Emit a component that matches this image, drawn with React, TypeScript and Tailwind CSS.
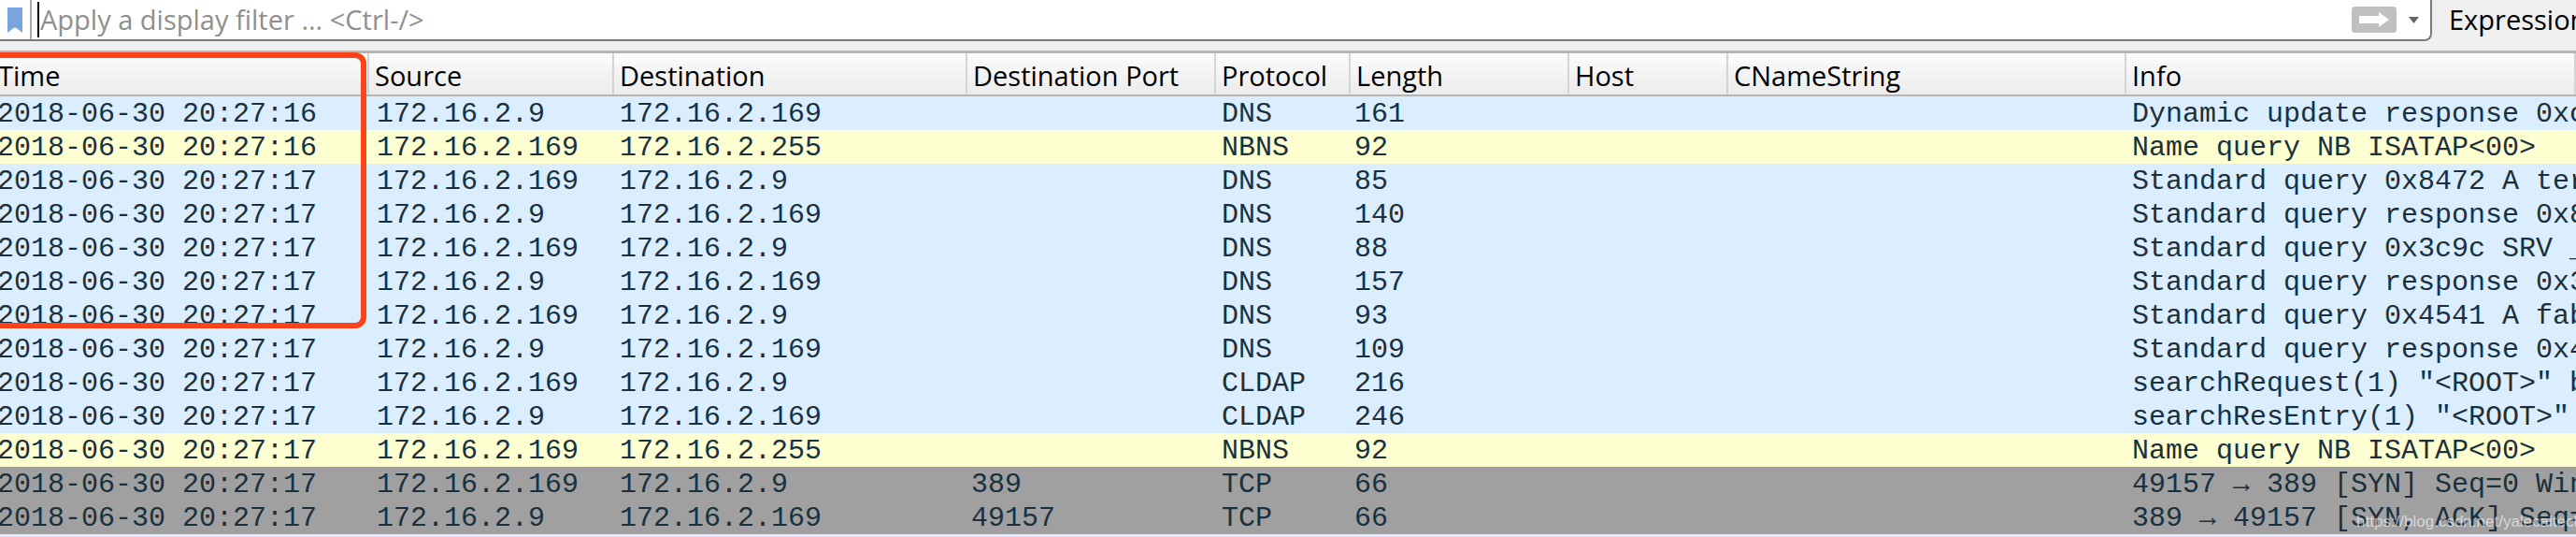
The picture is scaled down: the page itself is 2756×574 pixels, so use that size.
const columns = [
  { name: "Time", width: "w-[395px]", pad: "pl-0 -indent-[2px]" },
  { name: "Source", width: "w-[262px]", pad: "pl-[6px]" },
  { name: "Destination", width: "w-[378px]", pad: "pl-[6px]" },
  { name: "Destination Port", width: "w-[266px]", pad: "pl-[6px]" },
  { name: "Protocol", width: "w-[144px]", pad: "pl-[6px]" },
  { name: "Length", width: "w-[234px]", pad: "pl-[6px]" },
  { name: "Host", width: "w-[170px]", pad: "pl-[6px]" },
  { name: "CNameString", width: "w-[426px]", pad: "pl-[6px]" },
  { name: "Info", width: "flex-1", pad: "pl-[6px]" },
];

type Row = [string, string, string, string, string, string, string, string];

const rows: Row[] = [
  ["b", "2018-06-30 20:27:16", "172.16.2.9", "172.16.2.169", "", "DNS", "161", "Dynamic update response 0xc"],
  ["y", "2018-06-30 20:27:16", "172.16.2.169", "172.16.2.255", "", "NBNS", "92", "Name query NB ISATAP<00>"],
  ["b", "2018-06-30 20:27:17", "172.16.2.169", "172.16.2.9", "", "DNS", "85", "Standard query 0x8472 A ter"],
  ["b", "2018-06-30 20:27:17", "172.16.2.9", "172.16.2.169", "", "DNS", "140", "Standard query response 0x8"],
  ["b", "2018-06-30 20:27:17", "172.16.2.169", "172.16.2.9", "", "DNS", "88", "Standard query 0x3c9c SRV _"],
  ["b", "2018-06-30 20:27:17", "172.16.2.9", "172.16.2.169", "", "DNS", "157", "Standard query response 0x3"],
  ["b", "2018-06-30 20:27:17", "172.16.2.169", "172.16.2.9", "", "DNS", "93", "Standard query 0x4541 A fab"],
  ["b", "2018-06-30 20:27:17", "172.16.2.9", "172.16.2.169", "", "DNS", "109", "Standard query response 0x4"],
  ["b", "2018-06-30 20:27:17", "172.16.2.169", "172.16.2.9", "", "CLDAP", "216", 'searchRequest(1) "<ROOT>" b'],
  ["b", "2018-06-30 20:27:17", "172.16.2.9", "172.16.2.169", "", "CLDAP", "246", 'searchResEntry(1) "<ROOT>" '],
  ["y", "2018-06-30 20:27:17", "172.16.2.169", "172.16.2.255", "", "NBNS", "92", "Name query NB ISATAP<00>"],
  ["g", "2018-06-30 20:27:17", "172.16.2.169", "172.16.2.9", "389", "TCP", "66", "49157 → 389 [SYN] Seq=0 Win"],
  ["g", "2018-06-30 20:27:17", "172.16.2.9", "172.16.2.169", "49157", "TCP", "66", "389 → 49157 [SYN, ACK] Seq="],
];

const sans = "font-['Open_Sans','Noto_Sans',sans-serif]";

function RowView({ row }: { row: Row }) {
  const [kind, time, src, dst, port, proto, len, info] = row;
  const bg = kind === "b" ? "bg-[#daeeff]" : kind === "y" ? "bg-[#feffd0]" : "bg-[#a0a0a0]";
  return (
    <div className={`flex h-9 items-center pt-[2px] whitespace-pre text-[#1a303c] text-[30px] font-['Liberation_Mono',monospace] ${bg}`}>
      <div className="w-[395px] -ml-[3px] pl-0 shrink-0">{time}</div>
      <div className="w-[262px] pl-[11px] shrink-0">{src}</div>
      <div className="w-[378px] pl-[9px] shrink-0">{dst}</div>
      <div className="w-[266px] pl-[7px] shrink-0">{port}</div>
      <div className="w-[144px] pl-[9px] shrink-0">{proto}</div>
      <div className="w-[234px] pl-[7px] shrink-0">{len}</div>
      <div className="w-[170px] shrink-0" />
      <div className="w-[426px] shrink-0" />
      <div className="flex-1 pl-[9px] overflow-hidden">{info}</div>
    </div>
  );
}

export default function App() {
  return (
    <div className="relative w-[2756px] h-[574px] overflow-hidden bg-[#e7e6ff]">
      <div className="flex h-[44px] bg-[#efefef]">
        <div className="flex w-[2602px] h-[44px] items-center bg-white border-b-2 border-r-2 border-[#7a7a7a] rounded-br-lg shrink-0">
          <div className="w-[34px] h-full flex items-center justify-center border-r-2 border-[#a8a8a8] shrink-0">
            <svg width="16" height="27" viewBox="0 0 16 27" className="block">
              <path d="M0 0h16v27l-8-6-8 6z" fill="#78a6dc" />
            </svg>
          </div>
          <div className="w-[2px] h-[38px] ml-[6px] bg-black shrink-0" />
          <div className={`ml-[1px] flex-1 pb-[2px] text-[29px] leading-none text-[#8f8f8f] ${sans}`}>Apply a display filter ... &lt;Ctrl-/&gt;</div>
          <div className="w-[48px] h-[28px] rounded-sm bg-[#c0c0c0] flex items-center justify-center shrink-0">
            <svg width="34" height="18" viewBox="0 0 34 18" className="block">
              <path d="M1 5h21V1l11 8-11 8v-4H1z" fill="#fff" />
            </svg>
          </div>
          <div className="w-[36px] flex justify-center shrink-0">
            <svg width="11" height="7" viewBox="0 0 11 7" className="block">
              <path d="M0 0h11L5.500 7z" fill="#666" />
            </svg>
          </div>
        </div>
        <div className={`w-[154px] pl-[18px] overflow-hidden whitespace-pre text-[29px] leading-[42px] text-black ${sans}`}>Expression</div>
      </div>
      <div className="h-[10px] bg-[#efefef]" />
      <div className="flex h-[49px] border-t-[3px] border-b-[2px] border-[#b4b4b4] bg-gradient-to-b from-[#fcfcfc] to-[#ebebeb]">
        {columns.map((c) => (
          <div key={c.name} className={`${c.width} ${c.pad} shrink-0 border-r-2 border-[#d4d4d4] flex items-center pt-[2px] whitespace-pre text-[29px] leading-none text-black ${sans}`}>
            {c.name}
          </div>
        ))}
      </div>
      {rows.map((r, i) => (
        <RowView key={i} row={r} />
      ))}
      <div className="absolute left-[-12px] top-[56px] w-[404px] h-[295px] rounded-[12px] border-[6px] border-[#fc4319]" />
      <div className="absolute left-[2521px] top-[545px] whitespace-pre text-[17px] text-white/60 font-['Liberation_Sans',sans-serif]">https://blog.csdn.net/yalecaltech</div>
    </div>
  );
}
